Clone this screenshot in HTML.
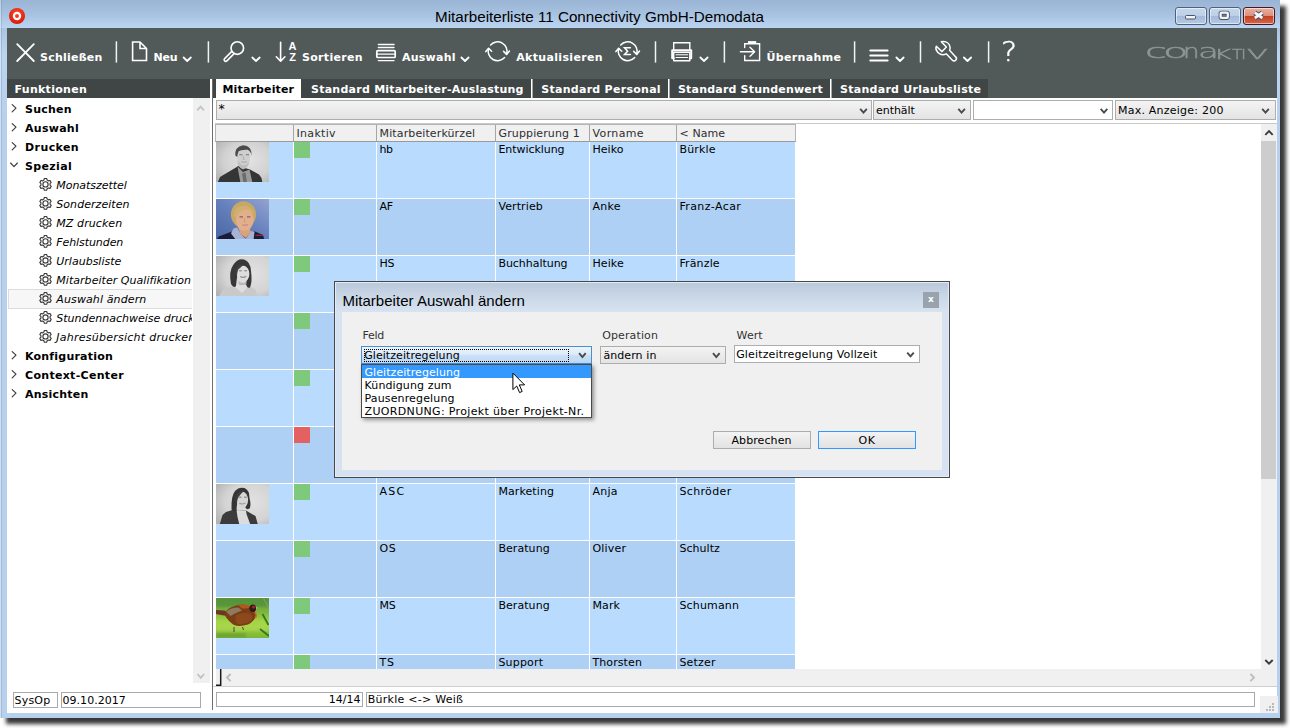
<!DOCTYPE html>
<html><head><meta charset="utf-8"><title>Mitarbeiterliste 11 Connectivity GmbH-Demodata</title>
<style>
*{box-sizing:border-box;margin:0;padding:0}
html,body{width:1290px;height:728px;overflow:hidden;background:#fff}
body{position:relative;font-family:"DejaVu Sans","Liberation Sans",sans-serif;font-size:11px;color:#000}
.a{position:absolute}
.t{position:absolute;white-space:nowrap;line-height:13px}
.b{font-weight:bold}
.i{font-style:italic}
.w{color:#fff}
#win{left:0;top:0;width:1280px;height:718px;background:linear-gradient(#99b4d4 0,#bbd5f1 56px,#b7d0eb 120px);box-shadow:6px 5.5px 4px rgba(0,0,0,.78)}
#title{left:0;top:0;width:1280px;height:28px;background:linear-gradient(#99b4d4,#a9c4e2 55%,#bbd5f1)}
.wb{position:absolute;top:7px;width:32px;height:18px;border:1px solid #52617a;border-radius:3px;box-shadow:inset 0 0 0 1px rgba(255,255,255,.55);background:linear-gradient(#c6d7ec,#bdd0e8 48%,#a2badb 52%,#b4c9e4)}
#tb{left:7px;top:28px;width:1270px;height:51px;background:#525a59}
#tabs{left:7px;top:79px;width:1270px;height:19px;background:#525a59}
.dk{background:#3f4645}
.sep{position:absolute;top:41px;width:1px;height:22px;background:#c9cccc}
.tsep{position:absolute;top:79px;width:2px;height:19px;background:linear-gradient(90deg,#fff 0 1px,#a6aaa9 1px 2px)}
#client{left:7px;top:98px;width:1270px;height:615px;background:#fff}
</style></head><body>
<div class="a" id="win"></div>
<div class="a" id="title"></div>
<div class="t" style="left:435px;top:8px;font:15.2px/18px 'Liberation Sans',sans-serif">Mitarbeiterliste 11 Connectivity GmbH-Demodata</div>
<div class="a" style="left:0;top:0;width:1px;height:718px;background:rgba(255,255,255,.35)"></div><div class="a" style="left:1px;top:0;width:1px;height:718px;background:rgba(60,90,130,.18)"></div>
<svg class="a" style="left:8px;top:7px" width="18" height="18" viewBox="0 0 18 18"><defs><radialGradient id="ic" cx="50%" cy="35%" r="65%"><stop offset="0" stop-color="#ff4a2a"/><stop offset="1" stop-color="#d81a08"/></radialGradient></defs><circle cx="9" cy="9" r="8" fill="url(#ic)"/><circle cx="9" cy="9" r="3.1" fill="none" stroke="#fff" stroke-width="2.2"/></svg>
<div class="wb" style="left:1175px"></div><div class="wb" style="left:1209px"></div>
<div class="wb" style="left:1243px;border-color:#4b1622;background:linear-gradient(#e9b0a2,#dc8f7c 48%,#c2401f 52%,#d2674c)"></div>
<svg class="a" style="left:1175px;top:7px" width="100" height="18" viewBox="1175 7 100 18"><rect x="1185.500" y="15.500" width="10" height="3.500" rx="1" fill="#f4f4f4" stroke="#4a5468" stroke-width="1"/><rect x="1220.600" y="12.700" width="7.200" height="5.200" rx=".8" fill="#5f7fb0" stroke="#4a5468" stroke-width="4"/><rect x="1220.600" y="12.700" width="7.200" height="5.200" rx=".8" fill="none" stroke="#f4f4f4" stroke-width="2.300"/><path d="M1254.800 12.700 L1262.400 18 M1262.400 12.700 L1254.800 18" stroke="#3d4a66" stroke-width="4.600" stroke-linecap="butt"/><path d="M1254.800 12.700 L1262.400 18 M1262.400 12.700 L1254.800 18" stroke="#f6f6f6" stroke-width="2.800" stroke-linecap="butt"/></svg>
<div class="a" id="tb"></div>
<div class="a" id="tabs"></div>
<div class="a" id="client"></div>
<svg class="a" style="left:7px;top:28px" width="1271" height="51" viewBox="7 28 1271 51" fill="none" stroke="#fff" stroke-width="1.5" stroke-linecap="round" stroke-linejoin="round">
<!-- close X -->
<path d="M17.200 44.200 L33.800 61 M33.800 44.200 L17.200 61" stroke-width="1.800"/>
<!-- new doc -->
<path d="M132.600 42 H140 L146.500 48.500 V60.500 H132.600 Z M140 42 V48.500 H146.500" stroke-width="1.600" stroke-linejoin="miter"/>
<!-- chevrons -->
<g stroke-width="1.8">
<path d="M183.6 57.5 L187.2 61 L190.8 57.5"/>
<path d="M252.3 57.5 L256 61 L259.7 57.5"/>
<path d="M461.4 57.5 L465 61 L468.6 57.5"/>
<path d="M700.4 57.5 L704 61 L707.6 57.5"/>
<path d="M896.4 57.5 L900 61 L903.6 57.5"/>
<path d="M963.9 57.5 L967.5 61 L971.1 57.5"/>
</g>
<!-- magnifier -->
<circle cx="237.300" cy="48" r="6.300" stroke-width="1.650"/>
<path d="M231.6 51.6 L224.6 58.6 A1.6 1.6 0 0 0 226.9 60.9 L233.9 53.9" stroke-width="1.550"/>
<!-- sort -->
<path d="M280.600 42.300 V61 M276.300 56.800 L280.600 61.200 L284.900 56.800" stroke-width="1.600"/>
<!-- auswahl -->
<path d="M378.4 44.4 H394 M378.4 47.5 H394 M378.4 60.6 H394" stroke-width="1.450"/>
<rect x="376.800" y="50.700" width="18.400" height="6.800" rx="1" stroke-width="1.700"/>
<path d="M377 54.1 H395" stroke-width="1.2"/>
<!-- refresh -->
<path d="M488.6 48.6 A9.4 9.4 0 0 0 504.6 57.6 M490.6 45.0 A9.4 9.4 0 0 1 506.6 54.0" stroke-width="1.5"/>
<path d="M485.8 51.6 L488.6 48.3 L491.6 51.2 M503.6 51.4 L506.6 54.4 L509.4 51.0" stroke-width="1.5"/>
<!-- sigma refresh -->
<path d="M618.7 48.6 A9.4 9.4 0 0 0 634.7 57.6 M620.7 45.0 A9.4 9.4 0 0 1 636.7 54.0" stroke-width="1.5"/>
<path d="M615.9 51.6 L618.7 48.3 L621.7 51.2 M633.7 51.4 L636.7 54.4 L639.5 51.0" stroke-width="1.5"/>
<path d="M630.400 47.800 H624.500 L627.600 51.200 L624.500 54.600 H630.400" stroke-width="1.500" stroke-linejoin="miter"/>
<!-- printer -->
<path d="M673.7 50 V42.8 H689.8 V50" stroke-width="1.4" stroke-linejoin="miter"/>
<path d="M673.700 58.200 H672.200 V50.300 H691.200 V58.200 H689.800" stroke-width="2"/>
<rect x="673.7" y="52.3" width="16.1" height="8.4" stroke-width="1.4"/>
<path d="M676 54.8 H687.6 M676 57.5 H687.6" stroke-width="1.1"/>
<!-- uebernahme -->
<path d="M744.7 47.6 V43.8 H759.6 V60.5 H744.7 V55.6" stroke-width="1.4" stroke-linejoin="miter"/>
<path d="M748 42.3 H756.2" stroke-width="2.4" stroke-linecap="butt"/>
<path d="M740.4 51.7 H754 M750 47.3 L754.6 51.7 L750 56.2" stroke-width="1.4"/>
<!-- hamburger -->
<path d="M870.3 50.6 H887.6 M870.3 55.6 H887.6 M870.3 60.6 H887.6" stroke-width="2"/>
<!-- wrench -->
<path d="M941.3 41.7 C944.2 40.8 947.9 42 949.4 45 C950.3 46.9 950.3 48.7 949.6 50.3 L955.7 56.9 A2.3 2.3 0 0 1 952.4 60.2 L946.2 53.8 C943.5 55.2 940 54.6 937.7 52.2 C936 50.4 935.5 48.2 936.3 46.3 L942 51.6 L946.4 47 Z" stroke-width="1.5"/>
<path d="M116.4 41.3 V62.6" stroke-width="1.5" stroke="#f2f3f3" stroke-linecap="butt"/><path d="M208.4 41.3 V62.6" stroke-width="1.5" stroke="#f2f3f3" stroke-linecap="butt"/><path d="M655.5 41.3 V62.6" stroke-width="1.5" stroke="#f2f3f3" stroke-linecap="butt"/><path d="M724.4 41.3 V62.6" stroke-width="1.5" stroke="#f2f3f3" stroke-linecap="butt"/><path d="M854.6 41.3 V62.6" stroke-width="1.5" stroke="#f2f3f3" stroke-linecap="butt"/><path d="M920.5 41.3 V62.6" stroke-width="1.5" stroke="#f2f3f3" stroke-linecap="butt"/><path d="M988.600 41.300 V62.600" stroke-width="1.5" stroke="#f2f3f3" stroke-linecap="butt"/></svg>
<div class="t b w" style="letter-spacing:0.239px;left:40px;top:51px">Schließen</div>
<div class="t b w" style="letter-spacing:-0.150px;left:153.5px;top:51px">Neu</div>
<div class="t b w" style="letter-spacing:0.322px;left:302px;top:51px">Sortieren</div>
<div class="t b w" style="letter-spacing:0.237px;left:402px;top:51px">Auswahl</div>
<div class="t b w" style="letter-spacing:0.342px;left:516.2px;top:51px">Aktualisieren</div>
<div class="t b w" style="letter-spacing:0.350px;left:766.5px;top:51px">Übernahme</div>
<div class="t b w" style="left:288.6px;top:39.5px;font:bold 11px/13px 'Liberation Sans',sans-serif">A</div>
<div class="t b w" style="left:289.2px;top:50.6px;font:bold 11px/13px 'Liberation Sans',sans-serif">Z</div>
<div class="t w" style="left:1000.5px;top:36.9px;font:200 27.3px/30px 'DejaVu Sans',sans-serif;-webkit-text-stroke:.45px #fff;transform-origin:0 0;transform:scaleX(1.11)">?</div>
<div class="a" style="left:0;top:0;color:#8f9594;-webkit-text-stroke:.45px #8f9594"><span class="a" style="left:1145.3px;top:37.1px;font:200 19.4px/30px 'DejaVu Sans',sans-serif;transform-origin:0 0;transform:scaleX(2.05)">c</span><span class="a" style="left:1162.8px;top:37.1px;font:200 19.4px/30px 'DejaVu Sans',sans-serif;transform-origin:0 0;transform:scaleX(2.15)">o</span><span class="a" style="left:1183.4px;top:37.1px;font:200 19.4px/30px 'DejaVu Sans',sans-serif;transform-origin:0 0;transform:scaleX(1.35)">n</span><span class="a" style="left:1198.1px;top:37.1px;font:200 19.4px/30px 'DejaVu Sans',sans-serif;transform-origin:0 0;transform:scaleX(1.76)">a</span><span class="a" style="left:1214.1px;top:38.7px;font:200 14.6px/30px 'DejaVu Sans',sans-serif;transform-origin:0 0;transform:scaleX(1.81);text-transform:uppercase">k</span><span class="a" style="left:1232.0px;top:38.7px;font:200 14.6px/30px 'DejaVu Sans',sans-serif;transform-origin:0 0;transform:scaleX(1.16);text-transform:uppercase">t</span><span class="a" style="left:1241.4px;top:38.7px;font:200 14.6px/30px 'DejaVu Sans',sans-serif;transform-origin:0 0;transform:scaleX(1.20);text-transform:uppercase">i</span><span class="a" style="left:1246.9px;top:38.7px;font:200 14.6px/30px 'DejaVu Sans',sans-serif;transform-origin:0 0;transform:scaleX(2.08);text-transform:uppercase">v</span></div>

<div class="a dk" style="left:7px;top:79px;width:203px;height:19px"></div>
<div class="t b w" style="letter-spacing:0.294px;left:14.5px;top:83px">Funktionen</div>
<div class="a dk" style="left:213px;top:79px;width:775px;height:19px"></div>
<div class="a" style="left:210px;top:79px;width:2px;height:634px;background:#fff"></div>
<div class="a" style="left:212px;top:79px;width:1px;height:631px;background:#6d6d6d"></div>
<div class="a" style="left:215.5px;top:79px;width:85.5px;height:19px;background:#fff"></div>
<div class="t b" style="letter-spacing:0.142px;left:222.5px;top:83px">Mitarbeiter</div>
<div class="t b w" style="letter-spacing:0.252px;left:311px;top:83px">Standard Mitarbeiter-Auslastung</div>
<div class="t b w" style="letter-spacing:0.273px;left:541.3px;top:83px">Standard Personal</div>
<div class="t b w" style="letter-spacing:0.195px;left:678px;top:83px">Standard Stundenwert</div>
<div class="t b w" style="letter-spacing:0.276px;left:840px;top:83px">Standard Urlaubsliste</div>
<div class="tsep" style="left:531px"></div><div class="tsep" style="left:668px"></div><div class="tsep" style="left:830px"></div>

<div class="a" style="left:193px;top:98px;width:17px;height:585px;background:#f0f0f0"></div>
<div class="a" style="left:8px;top:289px;width:184px;height:20px;background:#f7f7f7;border:1px solid #dcdcdc;border-right:0"></div>
<div class="a" style="left:7px;top:98px;width:185px;height:587px;overflow:hidden"><div class="a" style="left:-7px;top:-98px"><div class="t b" style="letter-spacing:0.239px;left:25px;top:103px">Suchen</div><div class="t b" style="letter-spacing:0.270px;left:25px;top:122px">Auswahl</div><div class="t b" style="letter-spacing:0.414px;left:25px;top:141px">Drucken</div><div class="t b" style="letter-spacing:0.346px;left:25px;top:160px">Spezial</div><div class="t i" style="letter-spacing:-0.043px;left:56.3px;top:179px">Monatszettel</div><div class="t i" style="letter-spacing:0.054px;left:56.3px;top:198px">Sonderzeiten</div><div class="t i" style="letter-spacing:0.081px;left:56.3px;top:217px">MZ drucken</div><div class="t i" style="letter-spacing:-0.084px;left:56.3px;top:236px">Fehlstunden</div><div class="t i" style="letter-spacing:0.001px;left:56.3px;top:255px">Urlaubsliste</div><div class="t i" style="letter-spacing:0.041px;left:56.3px;top:274px">Mitarbeiter Qualifikation</div><div class="t i" style="letter-spacing:0.119px;left:56.3px;top:293px">Auswahl ändern</div><div class="t i" style="letter-spacing:-0.007px;left:56.3px;top:312px">Stundennachweise drucken</div><div class="t i" style="letter-spacing:0.251px;left:56.3px;top:331px">Jahresübersicht drucken</div><div class="t b" style="letter-spacing:0.213px;left:25px;top:350px">Konfiguration</div><div class="t b" style="letter-spacing:0.307px;left:25px;top:369px">Context-Center</div><div class="t b" style="letter-spacing:0.215px;left:25px;top:388px">Ansichten</div></div></div>
<svg class="a" style="left:7px;top:98px" width="203" height="590" viewBox="7 98 203 590" fill="none" stroke="#3a3a3a" stroke-width="1.15" stroke-linejoin="round" stroke-linecap="round"><path d="M12.2 104.6 L16 108.2 L12.2 111.8"/><path d="M12.2 123.6 L16 127.2 L12.2 130.8"/><path d="M12.2 142.6 L16 146.2 L12.2 149.8"/><path d="M10.6 163.0 L14 166.6 L17.4 163.0"/><path d="M47.15 180.11 L46.64 178.51 L44.36 178.51 L43.85 180.11 L42.61 180.83 L40.97 180.46 L39.83 182.45 L40.96 183.68 L40.96 185.12 L39.83 186.35 L40.97 188.34 L42.61 187.97 L43.85 188.69 L44.36 190.29 L46.64 190.29 L47.15 188.69 L48.39 187.97 L50.03 188.34 L51.17 186.35 L50.04 185.12 L50.04 183.68 L51.17 182.45 L50.03 180.46 L48.39 180.83 Z"/><circle cx="45.5" cy="184.4" r="2.6"/><path d="M47.15 199.11 L46.64 197.51 L44.36 197.51 L43.85 199.11 L42.61 199.83 L40.97 199.46 L39.83 201.45 L40.96 202.68 L40.96 204.12 L39.83 205.35 L40.97 207.34 L42.61 206.97 L43.85 207.69 L44.36 209.29 L46.64 209.29 L47.15 207.69 L48.39 206.97 L50.03 207.34 L51.17 205.35 L50.04 204.12 L50.04 202.68 L51.17 201.45 L50.03 199.46 L48.39 199.83 Z"/><circle cx="45.5" cy="203.4" r="2.6"/><path d="M47.15 218.11 L46.64 216.51 L44.36 216.51 L43.85 218.11 L42.61 218.83 L40.97 218.46 L39.83 220.45 L40.96 221.68 L40.96 223.12 L39.83 224.35 L40.97 226.34 L42.61 225.97 L43.85 226.69 L44.36 228.29 L46.64 228.29 L47.15 226.69 L48.39 225.97 L50.03 226.34 L51.17 224.35 L50.04 223.12 L50.04 221.68 L51.17 220.45 L50.03 218.46 L48.39 218.83 Z"/><circle cx="45.5" cy="222.4" r="2.6"/><path d="M47.15 237.11 L46.64 235.51 L44.36 235.51 L43.85 237.11 L42.61 237.83 L40.97 237.46 L39.83 239.45 L40.96 240.68 L40.96 242.12 L39.83 243.35 L40.97 245.34 L42.61 244.97 L43.85 245.69 L44.36 247.29 L46.64 247.29 L47.15 245.69 L48.39 244.97 L50.03 245.34 L51.17 243.35 L50.04 242.12 L50.04 240.68 L51.17 239.45 L50.03 237.46 L48.39 237.83 Z"/><circle cx="45.5" cy="241.4" r="2.6"/><path d="M47.15 256.11 L46.64 254.51 L44.36 254.51 L43.85 256.11 L42.61 256.83 L40.97 256.46 L39.83 258.45 L40.96 259.68 L40.96 261.12 L39.83 262.35 L40.97 264.34 L42.61 263.97 L43.85 264.69 L44.36 266.29 L46.64 266.29 L47.15 264.69 L48.39 263.97 L50.03 264.34 L51.17 262.35 L50.04 261.12 L50.04 259.68 L51.17 258.45 L50.03 256.46 L48.39 256.83 Z"/><circle cx="45.5" cy="260.4" r="2.6"/><path d="M47.15 275.11 L46.64 273.51 L44.36 273.51 L43.85 275.11 L42.61 275.83 L40.97 275.46 L39.83 277.45 L40.96 278.68 L40.96 280.12 L39.83 281.35 L40.97 283.34 L42.61 282.97 L43.85 283.69 L44.36 285.29 L46.64 285.29 L47.15 283.69 L48.39 282.97 L50.03 283.34 L51.17 281.35 L50.04 280.12 L50.04 278.68 L51.17 277.45 L50.03 275.46 L48.39 275.83 Z"/><circle cx="45.5" cy="279.4" r="2.6"/><path d="M47.15 294.11 L46.64 292.51 L44.36 292.51 L43.85 294.11 L42.61 294.83 L40.97 294.46 L39.83 296.45 L40.96 297.68 L40.96 299.12 L39.83 300.35 L40.97 302.34 L42.61 301.97 L43.85 302.69 L44.36 304.29 L46.64 304.29 L47.15 302.69 L48.39 301.97 L50.03 302.34 L51.17 300.35 L50.04 299.12 L50.04 297.68 L51.17 296.45 L50.03 294.46 L48.39 294.83 Z"/><circle cx="45.5" cy="298.4" r="2.6"/><path d="M47.15 313.11 L46.64 311.51 L44.36 311.51 L43.85 313.11 L42.61 313.83 L40.97 313.46 L39.83 315.45 L40.96 316.68 L40.96 318.12 L39.83 319.35 L40.97 321.34 L42.61 320.97 L43.85 321.69 L44.36 323.29 L46.64 323.29 L47.15 321.69 L48.39 320.97 L50.03 321.34 L51.17 319.35 L50.04 318.12 L50.04 316.68 L51.17 315.45 L50.03 313.46 L48.39 313.83 Z"/><circle cx="45.5" cy="317.4" r="2.6"/><path d="M47.15 332.11 L46.64 330.51 L44.36 330.51 L43.85 332.11 L42.61 332.83 L40.97 332.46 L39.83 334.45 L40.96 335.68 L40.96 337.12 L39.83 338.35 L40.97 340.34 L42.61 339.97 L43.85 340.69 L44.36 342.29 L46.64 342.29 L47.15 340.69 L48.39 339.97 L50.03 340.34 L51.17 338.35 L50.04 337.12 L50.04 335.68 L51.17 334.45 L50.03 332.46 L48.39 332.83 Z"/><circle cx="45.5" cy="336.4" r="2.6"/><path d="M12.2 351.6 L16 355.2 L12.2 358.8"/><path d="M12.2 370.6 L16 374.2 L12.2 377.8"/><path d="M12.2 389.6 L16 393.2 L12.2 396.8"/>
<g stroke="#c2c2c2" stroke-width="1.8" stroke-linecap="butt" stroke-linejoin="miter"><path d="M197.300 110.300 L200.600 106.500 L203.900 110.300"/><path d="M197.500 674 L200.800 677.800 L204.100 674"/></g></svg>


<div class="a" style="left:216px;top:100px;width:656px;height:20px;border:1px solid #adadad;background:linear-gradient(#f3f3f3,#e4e4e4)"></div><div class="t" style="left:218.600px;top:101.500px;font-size:12.500px">*</div>
<div class="a" style="left:873px;top:100px;width:98px;height:20px;border:1px solid #adadad;background:linear-gradient(#f3f3f3,#e4e4e4)"></div><div class="t" style="letter-spacing:-0.057px;left:876px;top:104px">enthält</div>
<div class="a" style="left:973px;top:100px;width:140px;height:20px;border:1px solid #abadb3;background:#fff"></div>
<div class="a" style="left:1115px;top:100px;width:161px;height:20px;border:1px solid #adadad;background:linear-gradient(#f3f3f3,#e4e4e4)"></div><div class="t" style="letter-spacing:0.226px;left:1118px;top:104px">Max. Anzeige: 200</div>
<svg class="a" style="left:850px;top:100px" width="430" height="20" viewBox="850 100 430 20" fill="none" stroke="#4a4a4a" stroke-width="1.9"><path d="M860.2 108.8 L863.5 112.6 L866.8 108.8"/><path d="M958.3 108.8 L961.6 112.6 L964.9 108.8"/><path d="M1100.7 108.8 L1104.0 112.6 L1107.3 108.8"/><path d="M1262.2 108.8 L1265.5 112.6 L1268.8 108.8"/></svg>
<div class="a" style="left:215px;top:123px;width:1062px;height:1px;background:#c9c9c9"></div>
<div class="a" style="left:215px;top:124px;width:581px;height:18px;background:#f0f0f0;border:1px solid #b5b5b5;border-bottom-color:#9a9a9a"></div>
<div class="a" style="left:293px;top:125px;width:1px;height:16px;background:#a6a6a6"></div>
<div class="t" style="letter-spacing:0.280px;left:296.6px;top:127px;color:#2e2e2e">Inaktiv</div>
<div class="a" style="left:376px;top:125px;width:1px;height:16px;background:#a6a6a6"></div>
<div class="t" style="letter-spacing:0.115px;left:379.6px;top:127px;color:#2e2e2e">Mitarbeiterkürzel</div>
<div class="a" style="left:495px;top:125px;width:1px;height:16px;background:#a6a6a6"></div>
<div class="t" style="letter-spacing:0.112px;left:498.6px;top:127px;color:#2e2e2e">Gruppierung 1</div>
<div class="a" style="left:589px;top:125px;width:1px;height:16px;background:#a6a6a6"></div>
<div class="t" style="letter-spacing:0.344px;left:592.6px;top:127px;color:#2e2e2e">Vorname</div>
<div class="a" style="left:676px;top:125px;width:1px;height:16px;background:#a6a6a6"></div>
<div class="t" style="letter-spacing:0.066px;left:679.6px;top:127px;color:#2e2e2e">&lt; Name</div>
<div class="a" style="left:216px;top:142px;width:579px;height:528px;overflow:hidden;background:#fff">
<div class="a" style="left:0;top:0px;width:579px;height:56px;background:#b9dcfe"></div>
<div class="a" style="left:78px;top:0px;width:16px;height:16px;background:#7fc97c"></div>
<div class="t" style="letter-spacing:-0.369px;left:163.4px;top:1px">hb</div>
<div class="t" style="letter-spacing:-0.049px;left:282.4px;top:1px">Entwicklung</div>
<div class="t" style="letter-spacing:0.097px;left:376.4px;top:1px">Heiko</div>
<div class="t" style="letter-spacing:0.193px;left:463.4px;top:1px">Bürkle</div>
<div class="a" style="left:0;top:57px;width:579px;height:56px;background:#aed0f5"></div>
<div class="a" style="left:78px;top:57px;width:16px;height:16px;background:#7fc97c"></div>
<div class="t" style="letter-spacing:-0.059px;left:163.4px;top:58px">AF</div>
<div class="t" style="letter-spacing:0.113px;left:282.4px;top:58px">Vertrieb</div>
<div class="t" style="letter-spacing:0.317px;left:376.4px;top:58px">Anke</div>
<div class="t" style="letter-spacing:0.388px;left:463.4px;top:58px">Franz-Acar</div>
<div class="a" style="left:0;top:114px;width:579px;height:56px;background:#b9dcfe"></div>
<div class="a" style="left:78px;top:114px;width:16px;height:16px;background:#7fc97c"></div>
<div class="t" style="letter-spacing:-0.166px;left:163.4px;top:115px">HS</div>
<div class="t" style="letter-spacing:-0.035px;left:282.4px;top:115px">Buchhaltung</div>
<div class="t" style="letter-spacing:0.114px;left:376.4px;top:115px">Heike</div>
<div class="t" style="letter-spacing:0.140px;left:463.4px;top:115px">Fränzle</div>
<div class="a" style="left:0;top:171px;width:579px;height:56px;background:#aed0f5"></div>
<div class="a" style="left:78px;top:171px;width:16px;height:16px;background:#7fc97c"></div>
<div class="a" style="left:0;top:228px;width:579px;height:56px;background:#b9dcfe"></div>
<div class="a" style="left:78px;top:228px;width:16px;height:16px;background:#7fc97c"></div>
<div class="a" style="left:0;top:285px;width:579px;height:56px;background:#aed0f5"></div>
<div class="a" style="left:78px;top:285px;width:16px;height:16px;background:#e46161"></div>
<div class="a" style="left:0;top:342px;width:579px;height:56px;background:#b9dcfe"></div>
<div class="a" style="left:78px;top:342px;width:16px;height:16px;background:#7fc97c"></div>
<div class="t" style="letter-spacing:1.298px;left:163.4px;top:343px">ASC</div>
<div class="t" style="letter-spacing:0.096px;left:282.4px;top:343px">Marketing</div>
<div class="t" style="letter-spacing:0.268px;left:376.4px;top:343px">Anja</div>
<div class="t" style="letter-spacing:0.358px;left:463.4px;top:343px">Schröder</div>
<div class="a" style="left:0;top:399px;width:579px;height:56px;background:#aed0f5"></div>
<div class="a" style="left:78px;top:399px;width:16px;height:16px;background:#7fc97c"></div>
<div class="t" style="letter-spacing:0.759px;left:163.4px;top:400px">OS</div>
<div class="t" style="letter-spacing:0.067px;left:282.4px;top:400px">Beratung</div>
<div class="t" style="letter-spacing:0.204px;left:376.4px;top:400px">Oliver</div>
<div class="t" style="letter-spacing:0.062px;left:463.4px;top:400px">Schultz</div>
<div class="a" style="left:0;top:456px;width:579px;height:56px;background:#b9dcfe"></div>
<div class="a" style="left:78px;top:456px;width:16px;height:16px;background:#7fc97c"></div>
<div class="t" style="letter-spacing:-0.084px;left:163.4px;top:457px">MS</div>
<div class="t" style="letter-spacing:0.067px;left:282.4px;top:457px">Beratung</div>
<div class="t" style="letter-spacing:0.158px;left:376.4px;top:457px">Mark</div>
<div class="t" style="letter-spacing:0.175px;left:463.4px;top:457px">Schumann</div>
<div class="a" style="left:0;top:513px;width:579px;height:56px;background:#aed0f5"></div>
<div class="a" style="left:78px;top:513px;width:16px;height:16px;background:#7fc97c"></div>
<div class="t" style="letter-spacing:0.897px;left:163.4px;top:514px">TS</div>
<div class="t" style="letter-spacing:0.186px;left:282.4px;top:514px">Support</div>
<div class="t" style="letter-spacing:0.109px;left:376.4px;top:514px">Thorsten</div>
<div class="t" style="letter-spacing:0.212px;left:463.4px;top:514px">Setzer</div>
<div class="a" style="left:77px;top:0;width:1px;height:528px;background:#fff"></div>
<div class="a" style="left:160px;top:0;width:1px;height:528px;background:#fff"></div>
<div class="a" style="left:279px;top:0;width:1px;height:528px;background:#fff"></div>
<div class="a" style="left:373px;top:0;width:1px;height:528px;background:#fff"></div>
<div class="a" style="left:460px;top:0;width:1px;height:528px;background:#fff"></div>
<svg class="a" style="left:0;top:0" width="53" height="528" viewBox="0 0 53 528">
<defs>
<filter id="bl" x="-10%" y="-10%" width="120%" height="120%"><feGaussianBlur stdDeviation="0.7"/></filter>
<filter id="bl2" x="-10%" y="-10%" width="120%" height="120%"><feGaussianBlur stdDeviation="1.1"/></filter>
<radialGradient id="g1" cx="60%" cy="45%" r="75%"><stop offset="0" stop-color="#e4e4e4"/><stop offset=".6" stop-color="#d2d2d2"/><stop offset="1" stop-color="#b4b4b4"/></radialGradient>
<linearGradient id="g2" x1="0" y1="1" x2="1" y2="0"><stop offset="0" stop-color="#4a67a4"/><stop offset=".5" stop-color="#6580bb"/><stop offset="1" stop-color="#93a3d2"/></linearGradient>
<radialGradient id="g3" cx="65%" cy="45%" r="80%"><stop offset="0" stop-color="#e2e2e2"/><stop offset=".6" stop-color="#d4d4d4"/><stop offset="1" stop-color="#b2b2b2"/></radialGradient>
<linearGradient id="g5" x1="0" y1="0" x2="0" y2="1"><stop offset="0" stop-color="#5d9a3a"/><stop offset=".35" stop-color="#7db53c"/><stop offset=".6" stop-color="#a6d645"/><stop offset="1" stop-color="#7fb534"/></linearGradient>
<clipPath id="c1"><rect x="0" y="0" width="53" height="40"/></clipPath>
</defs>
<!-- photo 1 -->
<g clip-path="url(#c1)"><rect width="53" height="40" fill="url(#g1)"/>
<g filter="url(#bl)">
<path d="M1.5 41 L4 35 L9 32 L20 25.5 L22 24 L34 27.5 L43 32.5 L45.5 36 L46.5 41 Z" fill="#343434"/>
<path d="M21.5 24.5 L27 30 L33.5 27.5 L36.5 41 L24.5 41 L23 33 Z" fill="#9a9a9a"/>
<path d="M26 31.5 L29.5 30.5 L31 41 L27.5 41 Z" fill="#6c6c6c"/>
<path d="M21.5 18 Q21 25 27 27.500 Q33 26 33.500 18 Z" fill="#bdbdbd"/>
<ellipse cx="27.700" cy="14.500" rx="6.600" ry="8.800" fill="#cfcfcf"/>
<path d="M19.300 13.500 Q18.500 5 27 3.300 Q36 3.500 35.800 14 Q34.500 8.500 31.500 7.800 Q25 7.500 22.500 9.500 Q21.500 12 21.200 15 Z" fill="#4c4c4c"/>
<path d="M23.300 12.800 H26.500 M29.800 12.800 H33" stroke="#777" stroke-width="1.100"/>
<path d="M25.200 19.800 Q28 20.900 31 19.600" stroke="#a2a2a2" stroke-width=".9" fill="none"/><path d="M27.600 14 L27.200 17.300 L28.800 17.400" stroke="#a8a8a8" stroke-width=".8" fill="none"/>
</g></g>
<!-- photo 2 -->
<g transform="translate(0 57)"><g clip-path="url(#c1)"><rect width="53" height="40" fill="url(#g2)"/>
<g filter="url(#bl)">
<path d="M0.500 41 L2.500 37.500 L16 32.500 L24 38 L36 33 L39 32.500 L47 36 L48.500 41 Z" fill="#1b1f38"/>
<path d="M15 34.500 L17.500 29.500 L21 28.500 L25 35.500 L29.500 39.500 L34 34 L35.500 32 L38.500 33 L37.500 41 L20 41 Z" fill="#a7b3d2"/>
<ellipse cx="27.500" cy="15.500" rx="12.600" ry="13.300" fill="#c6a764"/>
<path d="M22 28 L33.500 28 L35 33.500 L29.500 39 L24.500 35 Z" fill="#d9a27c"/>
<ellipse cx="28.700" cy="20.500" rx="9" ry="11.300" fill="#e2ae8b"/>
<path d="M17.500 17 Q18.500 6.500 28 6.800 Q36 7 38.500 15.500 Q34 10.500 29.500 10.800 Q22.500 11.500 20.500 18.500 Z" fill="#d0b06e"/>
<path d="M23.500 17.800 H27 M31 17.800 H34.500" stroke="#7c6a62" stroke-width="1.200"/>
<path d="M26.300 25.600 Q29 27 32 25.500" stroke="#c58f80" stroke-width="1.300" fill="none"/><path d="M28.600 19 L28.200 22.600 L29.900 22.700" stroke="#cf9877" stroke-width=".9" fill="none"/>
<path d="M39.500 36.300 H47" stroke="#c42a2a" stroke-width="1"/>
</g></g></g>
<!-- photo 3 -->
<g transform="translate(0 114)"><g clip-path="url(#c1)"><rect width="53" height="40" fill="url(#g3)"/>
<g filter="url(#bl)">
<path d="M3 41 L6.500 34 L15 30.500 L22 29 L33 30 L39.500 33.500 L41.500 41 Z" fill="#c9c9c9"/>
<path d="M20 27 L30 27 L31 32 L26 37 L19 31 Z" fill="#dedede"/>
<path d="M15 28 Q12.500 15 17.500 8.500 Q22 2 28 3.500 Q34.500 5.500 35 15 Q36.500 26 34 31.500 Q31 32.500 30 28 Q31.500 22 30.500 17 L22 16 Q20.500 24 20 30 Q17.500 32.500 15 28 Z" fill="#383838"/>
<ellipse cx="27.200" cy="18" rx="6.200" ry="8.200" fill="#dedede"/>
<path d="M19.500 17.500 Q20.500 8 27.500 8.500 Q24.500 12 22 13.500 Q21 17 20.800 21 Z" fill="#404040"/>
<path d="M23 14.800 H25.800 M28.300 14.800 H31" stroke="#7a7a7a" stroke-width="1"/>
<path d="M24.300 20.400 Q27.200 22.300 30.200 20.200" stroke="#8e8e8e" stroke-width="1.200" fill="none"/><path d="M22.500 25 Q26.500 28.500 30.500 25.500 L30 29 L23 29 Z" fill="#b9b9b9"/>
</g></g></g>
<!-- photo 4 -->
<g transform="translate(0 342)"><g clip-path="url(#c1)"><rect width="53" height="40" fill="url(#g3)"/>
<g filter="url(#bl)">
<path d="M3.500 41 L6.500 31 L10 28 L18 25.500 L22 26 L30 26.500 L35 29.500 L39.500 32 L42 41 Z" fill="#3b3b3b"/>
<path d="M20.500 26 L30 26.500 L30.500 30 L34.500 41 L23.500 41 L21.500 33 Z" fill="#dcdcdc"/>
<path d="M15.500 25.500 Q15 12 19 7 Q23 2.500 28.500 4 Q33.500 6 33.500 14 Q35.500 21 33.500 24.500 Q31 26 29.500 24 L30 15 L22 15 Q20.500 22 20.500 27 Q17 28 15.500 25.500 Z" fill="#363636"/>
<ellipse cx="26.300" cy="16" rx="5.800" ry="8.200" fill="#d6d6d6"/>
<path d="M19.200 17 Q19.500 7.500 27.500 7.500 Q24 10.500 22.500 13 Q21 16 20.800 20 Z" fill="#3c3c3c"/>
<path d="M22.800 13.200 H25.500 M28 13.200 H30.800" stroke="#777" stroke-width="1"/>
<path d="M23.400 19.200 Q26.500 20.800 29.500 18.900" stroke="#949494" stroke-width="1.100" fill="none"/>
</g></g></g>
<!-- photo 5: pheasant -->
<g transform="translate(0 456)"><g clip-path="url(#c1)"><rect width="53" height="40" fill="url(#g5)"/>
<g filter="url(#bl2)"><rect x="0" y="0" width="53" height="9" fill="#4f8f3c" opacity=".7"/><rect x="0" y="26" width="53" height="7" fill="#b5dd55" opacity=".5"/><rect x="0" y="35" width="30" height="5" fill="#5f9a2c" opacity=".6"/></g>
<g filter="url(#bl)">
<path d="M47.500 0 L52 9" stroke="#9a9a60" stroke-width="1"/>
<path d="M46.500 16 L52.500 27 M44 31 L53 38" stroke="#2f7a1e" stroke-width="1.800"/>
<path d="M0 12 L8 12.500 L12 13.500 L14 18 L8 17.500 L0 16 Z" fill="#6e3526"/>
<path d="M18 29 V34 M26.500 29 L27.500 32" stroke="#5a4030" stroke-width="1"/>
<path d="M9 14 Q14 8 24 6.800 Q32 6 35 9.500 Q39.500 12 40 17 Q39 23 32 26.500 Q24 29 18 27 Q12 23 9 17.500 Z" fill="#7a3d17"/>
<path d="M22 7 Q31 5.500 34.500 9 Q31 11 26 10.500 Z" fill="#b5561a"/>
<path d="M10 13.500 Q15 9.500 22.500 9.500 L26 12.500 L19 15.500 L14.500 18 Z" fill="#8d7a5f"/>
<path d="M20 17 Q28 13.500 34.500 16 Q38 19 35 23 Q29 27 22 26 Q18 22 20 17 Z" fill="#8c4a1a"/>
<path d="M38.500 14 Q41.500 16.500 39.500 20" stroke="#d86a1a" stroke-width="1.500" fill="none"/>
<ellipse cx="36.800" cy="10.200" rx="3.300" ry="3.800" fill="#2c1a1c"/>
<ellipse cx="37.600" cy="9" rx="1.900" ry="1.600" fill="#a62224"/>
<path d="M39.800 8.800 L41.500 9.500 L40.500 11.500 Z" fill="#c9b9a0"/>
</g></g></g>
</svg>
</div>
<div class="a" style="left:1261px;top:124px;width:16px;height:546px;background:#f0f0f0"></div>
<div class="a" style="left:1261px;top:141px;width:15px;height:338px;background:#cdcdcd"></div>
<div class="a" style="left:216px;top:669px;width:1061px;height:17px;background:#f0f0f0"></div>
<svg class="a" style="left:213px;top:120px" width="1065" height="570" viewBox="213 120 1065 570" fill="none" stroke-width="1.9"><g stroke="#3c3c3c"><path d="M1265.3 134.8 L1269 131 L1272.7 134.8"/><path d="M1265.300 660 L1269 663.700 L1272.700 660"/></g><g stroke="#bdbdbd"><path d="M230.6 674 L227 677.6 L230.6 681.2"/><path d="M1250.4 674 L1254 677.6 L1250.4 681.2"/></g><path d="M220.700 669 V685.200 H216" stroke="#1a1a1a" stroke-width="1.500"/></svg>

<div class="a" style="left:213px;top:686px;width:1064px;height:1px;background:#cfcfcf"></div>
<div class="a" style="left:13px;top:692px;width:45px;height:16px;border:1px solid #a9a9a9;background:#fff"></div>
<div class="t" style="letter-spacing:0.206px;left:14.5px;top:694px">SysOp</div>
<div class="a" style="left:61px;top:692px;width:140px;height:16px;border:1px solid #a9a9a9;background:#fff"></div>
<div class="t" style="letter-spacing:0.035px;left:62.5px;top:694px">09.10.2017</div>
<div class="a" style="left:216px;top:692px;width:147px;height:15px;border:1px solid #a9a9a9;background:#fff"></div>
<div class="t" style="left:326px;top:693px;width:34.5px;text-align:right">14/14</div>
<div class="a" style="left:366px;top:692px;width:889px;height:15px;border:1px solid #a9a9a9;background:#fff"></div>
<div class="t" style="letter-spacing:0.262px;left:367.7px;top:693px">Bürkle &lt;-&gt; Weiß</div>
<div class="a" style="left:1260px;top:696px;width:18px;height:17px;background:#f0f0f0"></div>
<svg class="a" style="left:1263.700px;top:702px" width="12" height="12" viewBox="0 0 12 12" fill="#b8b8b8"><rect x="8" y="1" width="2" height="2"/><rect x="5" y="4" width="2" height="2"/><rect x="8" y="4" width="2" height="2"/><rect x="2" y="7" width="2" height="2"/><rect x="5" y="7" width="2" height="2"/><rect x="8" y="7" width="2" height="2"/></svg>

<div class="a" style="left:334px;top:281px;width:616px;height:197px;border:1px solid #484848;box-shadow:inset 0 0 0 1px #e3ebf5;background:linear-gradient(#b9c8da 0px,#cbd8e8 16px,#d7e3f1 30px,#d6e2f1 100%)"></div>
<div class="a" style="left:342px;top:312px;width:600px;height:158px;background:#f0f0f0"></div>
<div class="t" style="letter-spacing:0.025px;left:342.4px;top:291.5px;font:15px/18px 'Liberation Sans',sans-serif">Mitarbeiter Auswahl ändern</div>
<div class="a" style="left:923px;top:292px;width:16px;height:16px;background:#99a3ae"></div>
<div class="t b w" style="left:923px;top:292px;width:16px;text-align:center;font-size:9px;line-height:14px">x</div>
<div class="t" style="letter-spacing:-0.249px;left:362.5px;top:328.5px;color:#333">Feld</div>
<div class="t" style="letter-spacing:0.119px;left:602.2px;top:328.5px;color:#333">Operation</div>
<div class="t" style="letter-spacing:0.052px;left:736.6px;top:328.5px;color:#333">Wert</div>
<!-- feld combo -->
<div class="a" style="left:361px;top:346px;width:231px;height:18px;border:1px solid #4d8fcc;background:linear-gradient(#ecf4fc,#dcebfa 45%,#c9dff6 55%,#bfd9f3)"></div>
<div class="a" style="left:363.5px;top:348.5px;width:205px;height:13px;border:1px dotted #000"></div>
<div class="t" style="letter-spacing:0.067px;left:364.2px;top:348.5px">Gleitzeitregelung</div>
<!-- operation combo -->
<div class="a" style="left:600px;top:346px;width:126px;height:18px;border:1px solid #adadad;background:linear-gradient(#f3f3f3,#e4e4e4)"></div>
<div class="t" style="letter-spacing:0.088px;left:603.4px;top:348.5px">ändern in</div>
<!-- wert combo -->
<div class="a" style="left:734px;top:345px;width:186px;height:18px;border:1px solid #abadb3;background:#fff"></div>
<div class="t" style="letter-spacing:0.147px;left:736.2px;top:348px">Gleitzeitregelung Vollzeit</div>
<svg class="a" style="left:570px;top:345px" width="350" height="20" viewBox="570 345 350 20" fill="none" stroke="#4a4a4a" stroke-width="1.9"><path d="M579.1 353.2 L582.4 357 L585.7 353.2"/><path d="M713 353.2 L716.3 357 L719.6 353.2"/><path d="M907.2 352.6 L910.5 356.4 L913.8 352.6"/></svg>
<!-- buttons -->
<div class="a" style="left:713px;top:431px;width:98px;height:18px;border:1px solid #adadad;background:linear-gradient(#f3f3f3,#e2e2e2)"></div>
<div class="t" style="letter-spacing:0.088px;left:731.5px;top:433.5px">Abbrechen</div>
<div class="a" style="left:818px;top:431px;width:98px;height:18px;border:1px solid #3399ff;background:linear-gradient(#f3f3f3,#e2e2e2)"></div>
<div class="t" style="letter-spacing:0.825px;left:858.4px;top:433.5px">OK</div>
<!-- dropdown -->
<div class="a" style="left:361px;top:364px;width:231px;height:54px;border:1px solid #4a4a4a;background:#fff;box-shadow:2px 2px 4px rgba(0,0,0,.4)"></div>
<div class="a" style="left:362px;top:365px;width:229px;height:13px;background:#3399ff"></div>
<div class="t w" style="letter-spacing:0.067px;left:364.5px;top:366px">Gleitzeitregelung</div>
<div class="t" style="letter-spacing:0.124px;left:364.5px;top:379px">Kündigung zum</div>
<div class="t" style="letter-spacing:0.145px;left:364.5px;top:392px">Pausenregelung</div>
<div class="t" style="letter-spacing:0.340px;left:364.5px;top:405px">ZUORDNUNG: Projekt über Projekt-Nr.</div>
<!-- cursor -->
<svg class="a" style="left:511px;top:371px" width="18" height="24" viewBox="0 0 18 24"><path d="M1.9 2.1 V18.6 L5.7 15 L8.6 21.6 L11.2 20.4 L8.3 13.9 H13.6 Z" fill="#fff" stroke="#000" stroke-width="1" stroke-linejoin="miter"/></svg>

</body></html>
